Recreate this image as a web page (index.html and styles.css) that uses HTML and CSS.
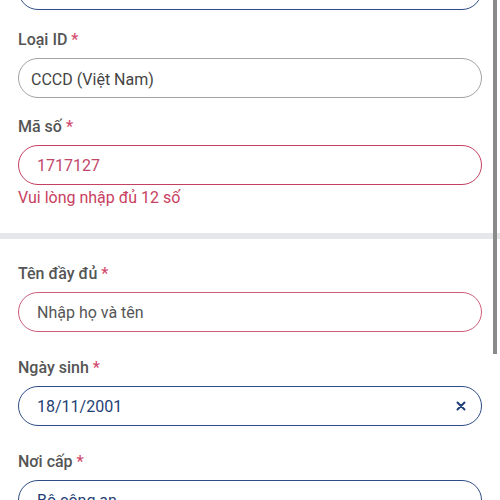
FILE: index.html
```
<!DOCTYPE html>
<html lang="vi">
<head>
    <meta charset="UTF-8">
    <title>Thông tin giấy tờ</title>
    <meta name="viewport" content="width=device-width, initial-scale=1">
    <link rel="stylesheet" href="styles.css">
</head>

<body>
<div class="form">
    <section class="group group-first">
        <div class="field field-cut">
            <div class="input input-blue"></div>
        </div>
        <div class="field">
            <div class="label">Loại ID <span class="req">*</span></div>
            <div class="input input-grey select-text">CCCD (Việt Nam)</div>
        </div>
        <div class="field field-tight">
            <div class="label">Mã số <span class="req">*</span></div>
            <div class="input input-red">1717127</div>
            <div class="error">Vui lòng nhập đủ 12 số</div>
        </div>
    </section>

    <div class="divider"></div>

    <section class="group group-second">
        <div class="field">
            <div class="label">Tên đầy đủ <span class="req">*</span></div>
            <div class="input input-pink placeholder">Nhập họ và tên</div>
        </div>
        <div class="field">
            <div class="label">Ngày sinh <span class="req">*</span></div>
            <div class="input input-blue">
                <span>18/11/2001</span>
                <svg class="clear" width="10" height="10" viewBox="0 0 10 10">
                    <path d="M1.5 1.5 L8.5 8.5 M8.5 1.5 L1.5 8.5" stroke="#1f3f75" stroke-width="2" stroke-linecap="round"/>
                </svg>
            </div>
        </div>
        <div class="field">
            <div class="label">Nơi cấp <span class="req">*</span></div>
            <div class="input input-blue">Bộ công an</div>
        </div>
    </section>
</div>

<div class="scrollbar"></div>
</body>
</html>
```

FILE: styles.css
```
html, body {
    margin: 0;
    height: 100%;
    overflow: hidden;
    background-color: #ffffff;
}
body {
    font-family: Roboto, "Noto Sans", Arial, sans-serif;
    font-size: 16px;
}
.group {
    padding: 0 18px;
}
.group-second {
    padding-top: 25px;
}
.field {
    margin-top: 26px;
}
.group-first .field {
    margin-top: 20px;
}
.group-first .field-tight {
    margin-top: 19px;
}
.group-second .field:first-child {
    margin-top: 0;
}
.group-first .field-cut {
    margin-top: -30px;
}
.label {
    color: #555555;
    font-weight: 500;
    line-height: 19px;
    margin-bottom: 9px;
}
.req {
    color: #d24a6d;
}
.input {
    box-sizing: border-box;
    height: 40px;
    border: 1px solid #9e9e9e;
    border-radius: 20px;
    padding: 0 18px;
    display: flex;
    align-items: center;
    justify-content: space-between;
    color: #444444;
    line-height: 19px;
}
.select-text {
    padding-left: 12px;
    padding-top: 3px;
}
.input-grey {
    border-color: #a3a3a3;
}
.input-red {
    border-color: #c53f60;
    color: #c2466a;
}
.input-pink {
    border-color: #cc5c7a;
}
.input-blue {
    border-color: #2d4d84;
    color: #1f3f75;
}
.placeholder {
    color: #555555;
}
.clear {
    margin-right: -3px;
}
.error {
    margin-top: 3px;
    color: #c8415f;
    line-height: 19px;
}
.divider {
    margin-top: 26px;
    height: 6px;
    background-color: #e6e7ea;
}
.scrollbar {
    position: absolute;
    top: 0;
    left: 493px;
    width: 4px;
    height: 354px;
    background-color: #8a8a8a;
}
```
